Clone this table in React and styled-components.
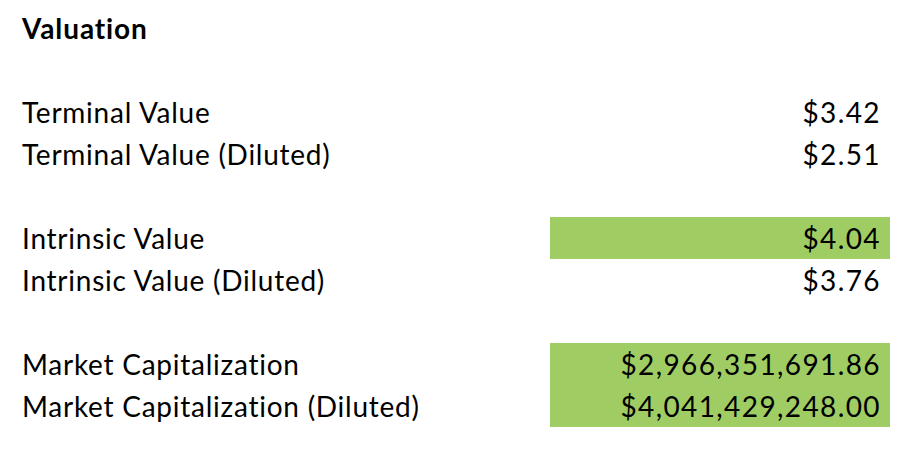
import React from "react";
import styled, { createGlobalStyle } from "styled-components";

const Global = createGlobalStyle`
  html, body { margin: 0; padding: 0; background: #ffffff; }
  body { font-family: Lato, "Noto Sans", sans-serif; color: #000; }
`;

const Sheet = styled.div`
  width: 914px;
  height: 452px;
  padding: 7px 24px 0 22px;
  box-sizing: border-box;
  display: grid;
  grid-template-columns: 1fr 340px;
  grid-auto-rows: 42px;
`;

const Title = styled.div`
  grid-column: 1 / -1;
  display: flex;
  align-items: center;
  font-weight: 700;
  font-size: 28px;
  letter-spacing: 0.9px;
`;

const Spacer = styled.div`
  grid-column: 1 / -1;
`;

const Label = styled.div`
  display: flex;
  align-items: center;
  font-size: 28px;
  letter-spacing: 0.75px;
  white-space: nowrap;
`;

const Value = styled.div`
  display: flex;
  align-items: center;
  justify-content: flex-end;
  padding-right: 9px;
  font-size: 28px;
  letter-spacing: 1.4px;
  white-space: nowrap;
  background: ${(p) => (p.$hl ? "#9fcd63" : "transparent")};
`;

const groups = [
  [
    ["Terminal Value", "$3.42"],
    ["Terminal Value (Diluted)", "$2.51"],
  ],
  [
    ["Intrinsic Value", "$4.04", true],
    ["Intrinsic Value (Diluted)", "$3.76"],
  ],
  [
    ["Market Capitalization", "$2,966,351,691.86", true],
    ["Market Capitalization (Diluted)", "$4,041,429,248.00", true],
  ],
];

export default function App() {
  return (
    <>
      <Global />
      <Sheet>
        <Title>Valuation</Title>
        {groups.map((g, i) => (
          <React.Fragment key={i}>
            <Spacer />
            {g.map(([l, v, hl]) => (
              <React.Fragment key={l}>
                <Label>{l}</Label>
                <Value $hl={hl}>{v}</Value>
              </React.Fragment>
            ))}
          </React.Fragment>
        ))}
      </Sheet>
    </>
  );
}
